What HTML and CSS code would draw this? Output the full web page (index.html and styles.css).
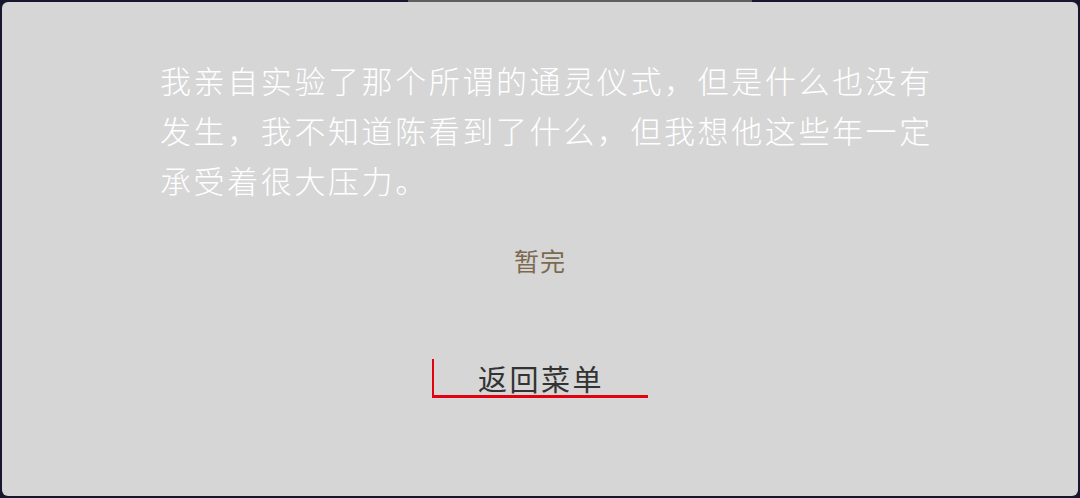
FILE: index.html
```html
<!DOCTYPE html>
<html lang="zh-CN">
<head>
<meta charset="utf-8">
<title>暂完</title>
<link rel="stylesheet" href="styles.css">
</head>
<body>
<div class="frame">
  <div class="topbar"></div>
  <main class="panel">
    <p class="story">我亲自实验了那个所谓的通灵仪式，但是什么也没有发生，我不知道陈看到了什么，但我想他这些年一定承受着很大压力。</p>
    <p class="status">暂完</p>
    <button class="menu-btn" type="button">返回菜单</button>
  </main>
</div>
</body>
</html>
```

FILE: styles.css
```css
html, body {
  margin: 0;
  padding: 0;
  width: 1080px;
  height: 498px;
  overflow: hidden;
  background: #16162c;
}

.frame {
  position: relative;
  box-sizing: border-box;
  width: 1080px;
  height: 498px;
  padding: 2px;
  background: #16162c;
}

.topbar {
  position: absolute;
  top: 0;
  left: 408px;
  width: 344px;
  height: 2px;
  background: #5e5e62;
}

.panel {
  box-sizing: border-box;
  height: 100%;
  background: #d6d6d6;
  border-radius: 6px;
  display: flex;
  flex-direction: column;
  align-items: flex-start;
  padding-top: 53px;
  font-family: "Noto Sans CJK SC", "Noto Sans", sans-serif;
}

.story {
  margin: 0 0 0 158px;
  width: 776px;
  color: #ffffff;
  font-size: 31px;
  font-weight: 300;
  letter-spacing: 2.6px;
  line-height: 50px;
}

.status {
  align-self: center;
  margin: 40px 0 0;
  color: #7b6a4f;
  font-size: 25px;
  line-height: 30px;
  letter-spacing: 1px;
}

.menu-btn {
  align-self: center;
  box-sizing: border-box;
  margin-top: 84px;
  width: 216px;
  height: 39px;
  padding: 2px 0 0;
  background: transparent;
  border: none;
  border-left: 2px solid #e3000f;
  border-bottom: 3px solid #e3000f;
  color: #333333;
  font-family: "Noto Sans CJK SC", "Noto Sans", sans-serif;
  font-size: 29px;
  font-weight: 400;
  line-height: 34px;
  letter-spacing: 2.5px;
  cursor: pointer;
}
```
